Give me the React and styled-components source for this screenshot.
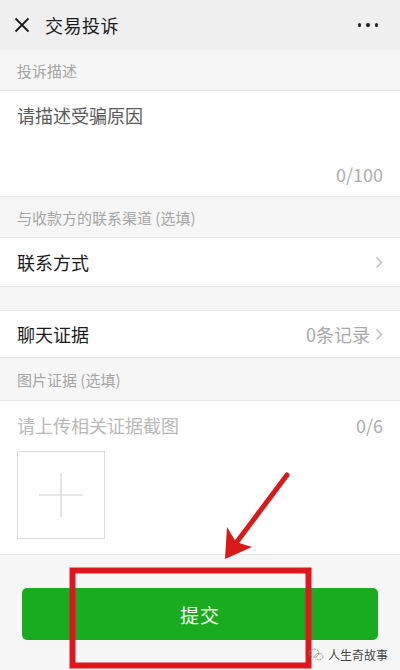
import React from "react";
import styled, { createGlobalStyle } from "styled-components";

const Global = createGlobalStyle`
  html, body { margin: 0; padding: 0; }
  body {
    font-family: "Noto Sans CJK SC", "Noto Sans", sans-serif;
    background: #f6f6f6;
  }
  * { box-sizing: border-box; }
`;

const Page = styled.div`
  position: relative;
  width: 400px;
  height: 670px;
  display: flex;
  flex-direction: column;
  background: #f6f6f6;
  overflow: hidden;
`;

const Header = styled.header`
  height: 50px;
  flex: none;
  display: flex;
  align-items: center;
  padding: 0 14px;
  background: #efefef;
`;

const Title = styled.h1`
  margin: 0 0 0 15px;
  flex: 1;
  font-size: 18px;
  font-weight: 400;
  color: #1c1c1c;
  letter-spacing: 0.5px;
`;

const Dots = styled.div`
  display: flex;
  gap: 5px;
  margin-right: 8px;
  span {
    width: 3.5px;
    height: 3.5px;
    border-radius: 50%;
    background: #222;
  }
`;

const SectionLabel = styled.div`
  height: ${(p) => p.$h || 41}px;
  flex: none;
  display: flex;
  align-items: center;
  padding: 0 17px;
  font-size: 15px;
  color: #a6a6a6;
  border-bottom: 1px solid #e6e6e6;
`;

const Panel = styled.div`
  flex: none;
  background: #fff;
  border-bottom: 1px solid #e6e6e6;
`;

const Describe = styled(Panel)`
  height: 106px;
  display: flex;
  flex-direction: column;
  padding: 12px 17px 10px;
`;

const Placeholder = styled.div`
  flex: 1;
  font-size: 18px;
  line-height: 24px;
  color: ${(p) => p.$light ? "#b9b9b9" : "#5a5a5a"};
`;

const Counter = styled.div`
  align-self: flex-end;
  font-size: 18px;
  line-height: 24px;
  color: #adadad;
`;

const Row = styled(Panel)`
  height: ${(p) => p.$h || 49}px;
  display: flex;
  align-items: center;
  padding: 0 17px;
  border-top: ${(p) => p.$top ? "1px solid #e6e6e6" : "none"};
`;

const RowTitle = styled.span`
  flex: 1;
  font-size: 18px;
  color: #1c1c1c;
`;

const RowValue = styled.span`
  font-size: 18px;
  color: #a8a8a8;
  margin-right: 5px;
`;

const Spacer = styled.div`
  height: 23px;
  flex: none;
`;

const Upload = styled(Panel)`
  height: 154px;
  padding: 12px 17px 0;
`;

const UploadHead = styled.div`
  display: flex;
  justify-content: space-between;
  align-items: center;
  height: 24px;
  margin-bottom: 14px;
`;

const AddBox = styled.div`
  width: 88px;
  height: 88px;
  border: 1px solid #dcdcdc;
  display: flex;
  align-items: center;
  justify-content: center;
`;

const Footer = styled.div`
  flex: 1;
  padding: 33px 22px 0;
`;

const SubmitButton = styled.button`
  width: 100%;
  height: 52px;
  border: none;
  border-radius: 5px;
  background: #1aac20;
  color: #f4fff2;
  font-family: inherit;
  font-size: 19px;
  letter-spacing: 1px;
`;

const Annotation = styled.svg`
  position: absolute;
  left: 0;
  top: 0;
  pointer-events: none;
`;

const Watermark = styled.div`
  position: absolute;
  right: 12px;
  bottom: 7px;
  display: flex;
  align-items: center;
  gap: 4px;
  font-size: 12px;
  color: #444;
  text-shadow: 0 0 2px #fff, 0 0 2px #fff;
`;

const Chevron = () => (
  <svg width="8" height="13" viewBox="0 0 8 13">
    <path d="M1.5 1.5 L6.5 6.5 L1.5 11.5" fill="none" stroke="#c2c2c2" strokeWidth="1.6" />
  </svg>
);

export default function App() {
  return (
    <>
      <Global />
      <Page>
        <Header>
          <svg width="16" height="16" viewBox="0 0 16 16">
            <path d="M1.5 1.5 L14.5 14.5 M14.5 1.5 L1.5 14.5" stroke="#1c1c1c" strokeWidth="1.8" />
          </svg>
          <Title>交易投诉</Title>
          <Dots><span /><span /><span /></Dots>
        </Header>

        <SectionLabel>投诉描述</SectionLabel>
        <Describe>
          <Placeholder>请描述受骗原因</Placeholder>
          <Counter>0/100</Counter>
        </Describe>

        <SectionLabel>与收款方的联系渠道 (选填)</SectionLabel>
        <Row>
          <RowTitle>联系方式</RowTitle>
          <Chevron />
        </Row>
        <Spacer />
        <Row $top $h={48}>
          <RowTitle>聊天证据</RowTitle>
          <RowValue>0条记录</RowValue>
          <Chevron />
        </Row>

        <SectionLabel $h={43}>图片证据 (选填)</SectionLabel>
        <Upload>
          <UploadHead>
            <Placeholder $light>请上传相关证据截图</Placeholder>
            <Counter>0/6</Counter>
          </UploadHead>
          <AddBox>
            <svg width="44" height="44" viewBox="0 0 44 44">
              <path d="M22 0 V44 M0 22 H44" stroke="#d4d4d4" strokeWidth="1.2" />
            </svg>
          </AddBox>
        </Upload>

        <Footer>
          <SubmitButton>提交</SubmitButton>
        </Footer>

        <Annotation width="400" height="670" viewBox="0 0 400 670">
          <path d="M287 475 L230 551" stroke="#d81a1a" strokeWidth="5" strokeLinecap="round" />
          <path d="M225 559 L227 527 L236 542 L252 547 Z" fill="#d81a1a" />
          <rect x="72.5" y="570.5" width="236" height="95" fill="none" stroke="#e0161c" strokeWidth="6" />
        </Annotation>

        <Watermark>
          <svg width="16" height="13" viewBox="0 0 16 13">
            <ellipse cx="6" cy="5" rx="5" ry="4" fill="none" stroke="#888" strokeWidth="0.9" strokeDasharray="2 1" />
            <ellipse cx="11" cy="8.5" rx="4" ry="3.2" fill="none" stroke="#888" strokeWidth="0.9" strokeDasharray="2 1" />
          </svg>
          <span>人生奇故事</span>
        </Watermark>
      </Page>
    </>
  );
}
